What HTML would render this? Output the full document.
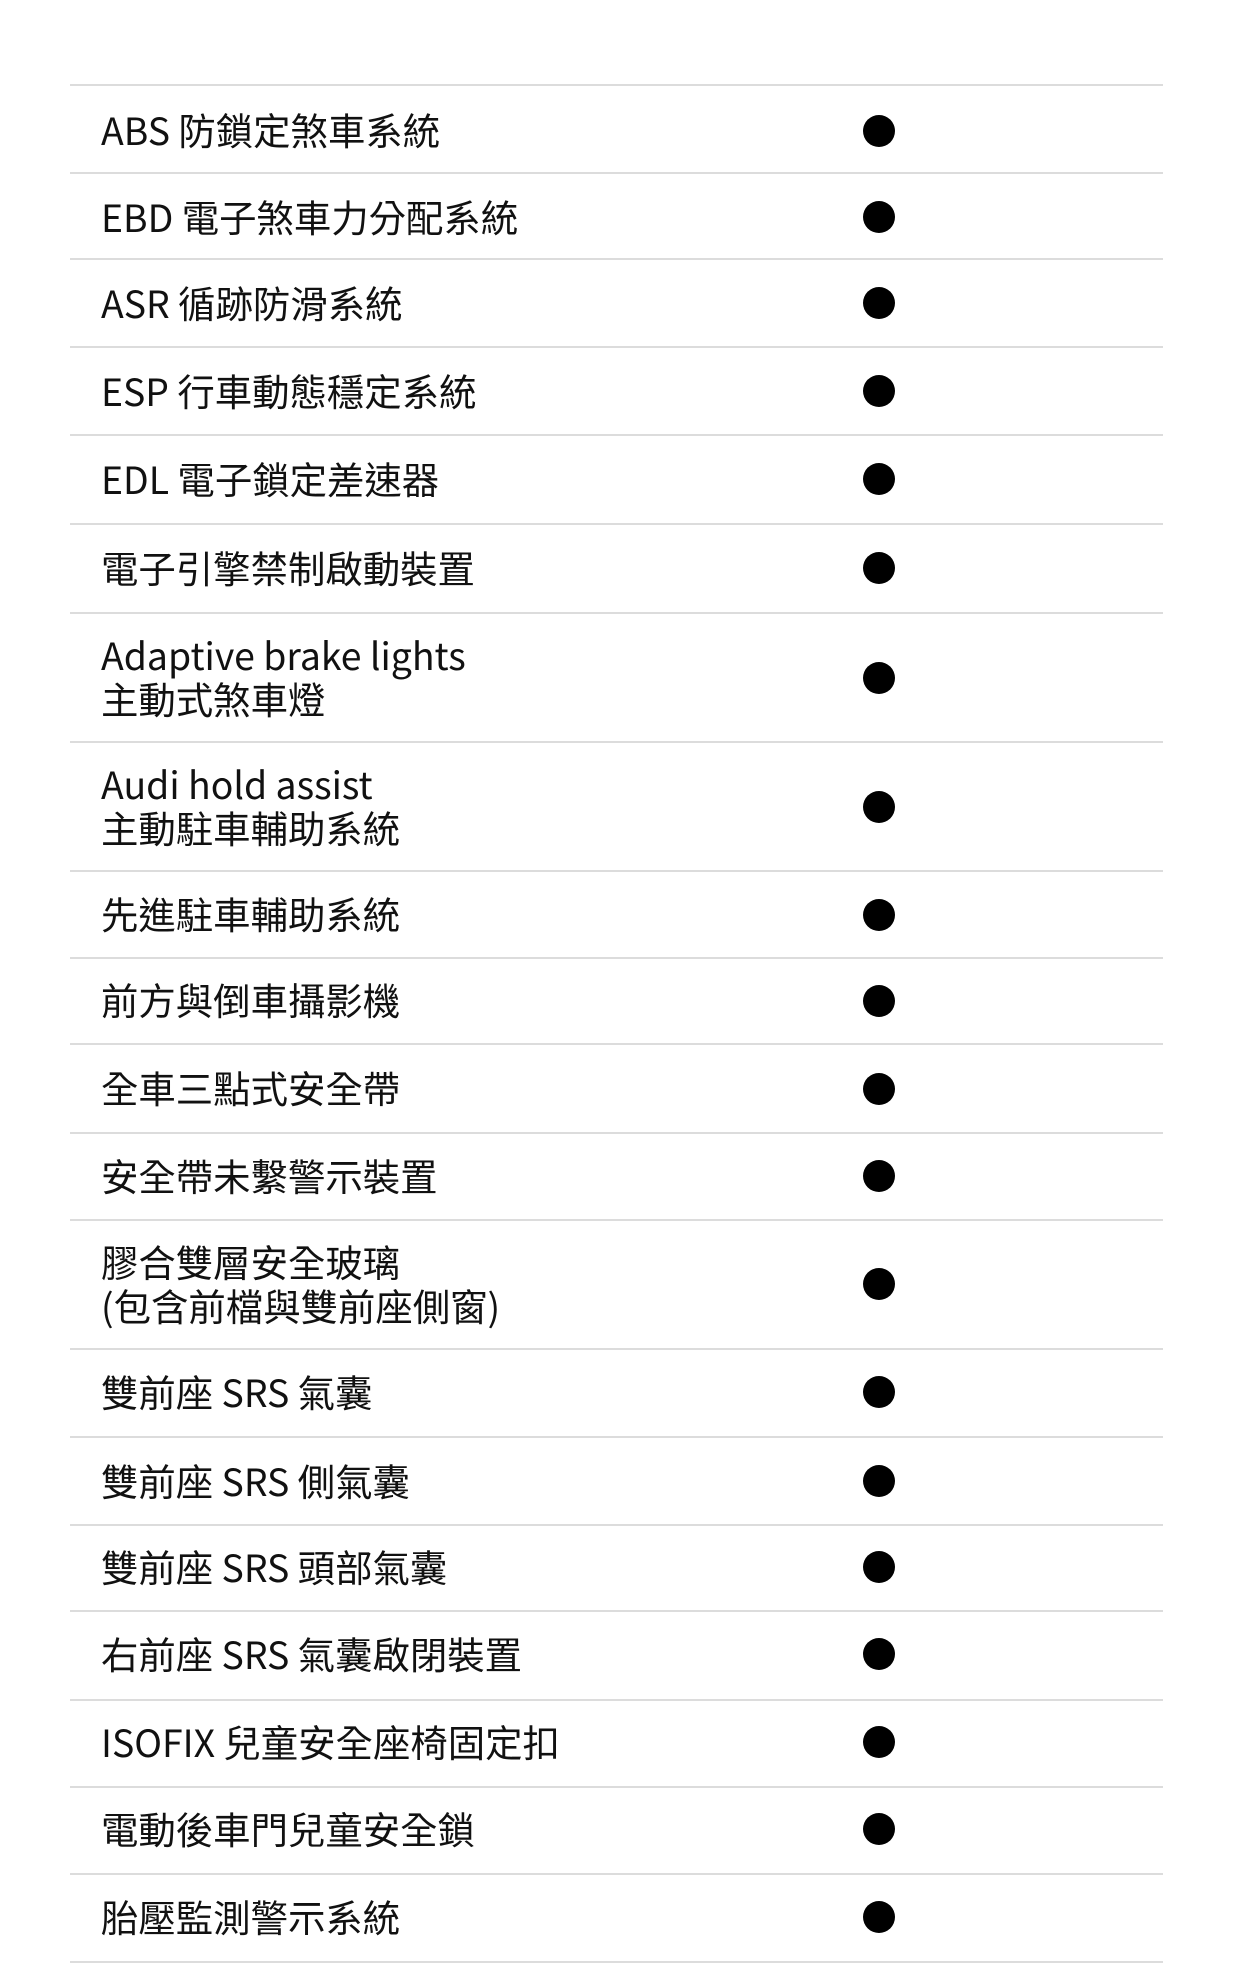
<!DOCTYPE html>
<html><head><meta charset="utf-8"><style>
html,body{margin:0;padding:0;background:#fff;}
body{width:1237px;height:1980px;position:relative;overflow:hidden;font-family:"Noto Sans CJK TC","Liberation Sans",sans-serif;color:#111;}
.l{position:absolute;left:70px;width:1093px;height:2px;background:#dcdcdc;}
.t{position:absolute;left:101px;font-size:37.4px;line-height:44px;white-space:nowrap;transform:translateY(-50%);}
.d{position:absolute;left:863px;width:32px;height:32px;border-radius:50%;background:#000;transform:translateY(-50%);}
</style></head><body>
<div class="l" style="top:84px"></div>
<div class="l" style="top:172px"></div>
<div class="l" style="top:258px"></div>
<div class="l" style="top:346px"></div>
<div class="l" style="top:434px"></div>
<div class="l" style="top:523px"></div>
<div class="l" style="top:612px"></div>
<div class="l" style="top:741px"></div>
<div class="l" style="top:870px"></div>
<div class="l" style="top:957px"></div>
<div class="l" style="top:1043px"></div>
<div class="l" style="top:1132px"></div>
<div class="l" style="top:1219px"></div>
<div class="l" style="top:1348px"></div>
<div class="l" style="top:1436px"></div>
<div class="l" style="top:1524px"></div>
<div class="l" style="top:1610px"></div>
<div class="l" style="top:1699px"></div>
<div class="l" style="top:1786px"></div>
<div class="l" style="top:1873px"></div>
<div class="l" style="top:1961px"></div>

<div class="t" style="top:129px">ABS 防鎖定煞車系統</div><div class="d" style="top:131px"></div>
<div class="t" style="top:216px">EBD 電子煞車力分配系統</div><div class="d" style="top:217px"></div>
<div class="t" style="top:302px">ASR 循跡防滑系統</div><div class="d" style="top:303px"></div>
<div class="t" style="top:390px">ESP 行車動態穩定系統</div><div class="d" style="top:391px"></div>
<div class="t" style="top:478px">EDL 電子鎖定差速器</div><div class="d" style="top:479px"></div>
<div class="t" style="top:567px">電子引擎禁制啟動裝置</div><div class="d" style="top:568px"></div>
<div class="t" style="top:676px">Adaptive brake lights<br>主動式煞車燈</div><div class="d" style="top:678px"></div>
<div class="t" style="top:805px">Audi hold assist<br>主動駐車輔助系統</div><div class="d" style="top:807px"></div>
<div class="t" style="top:913px">先進駐車輔助系統</div><div class="d" style="top:915px"></div>
<div class="t" style="top:999px">前方與倒車攝影機</div><div class="d" style="top:1001px"></div>
<div class="t" style="top:1087px">全車三點式安全帶</div><div class="d" style="top:1089px"></div>
<div class="t" style="top:1175px">安全帶未繫警示裝置</div><div class="d" style="top:1176px"></div>
<div class="t" style="top:1283px">膠合雙層安全玻璃<br>(包含前檔與雙前座側窗)</div><div class="d" style="top:1284px"></div>
<div class="t" style="top:1391px">雙前座 SRS 氣囊</div><div class="d" style="top:1392px"></div>
<div class="t" style="top:1480px">雙前座 SRS 側氣囊</div><div class="d" style="top:1481px"></div>
<div class="t" style="top:1566px">雙前座 SRS 頭部氣囊</div><div class="d" style="top:1567px"></div>
<div class="t" style="top:1653px">右前座 SRS 氣囊啟閉裝置</div><div class="d" style="top:1654px"></div>
<div class="t" style="top:1741px">ISOFIX 兒童安全座椅固定扣</div><div class="d" style="top:1742px"></div>
<div class="t" style="top:1828px">電動後車門兒童安全鎖</div><div class="d" style="top:1829px"></div>
<div class="t" style="top:1916px">胎壓監測警示系統</div><div class="d" style="top:1917px"></div>
</body></html>
